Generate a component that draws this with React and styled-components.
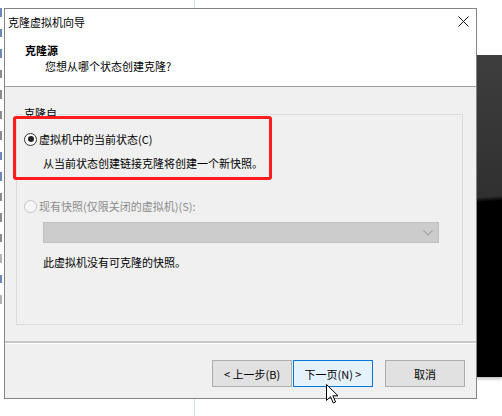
import React from 'react';
import styled, {createGlobalStyle} from 'styled-components';

const GlobalStyle = createGlobalStyle`
    html, body {
        margin: 0;
        padding: 0;
        background: #fff;
    }
    body {
        font-family: "Noto Sans CJK SC", "Noto Sans", sans-serif;
        font-size: 11px;
        color: #000;
    }
`;

// fragments of the page behind the dialog, only their right edges show
const edgeMarks = [
    {h: 9, c: '#3b5fa8'}, {h: 8, c: '#3b5fa8'}, {h: 9, c: '#3b5fa8'},
    {h: 8, c: '#666'}, {h: 9, c: '#666'}, {h: 8, c: '#666'},
    {h: 9, c: '#666'}, {h: 8, c: '#3b5fa8'}, {h: 9, c: '#3b5fa8'},
    {h: 8, c: '#666'}, {h: 9, c: '#666'}, {h: 8, c: '#666'},
    {h: 9, c: '#999'}, {h: 8, c: '#3b5fa8'}, {h: 9, c: '#999'},
];

const App = () => {
    return (
        <>
            <GlobalStyle/>
            <Screen>
                <GuideLine/>
                <EdgeStrip>
                    {edgeMarks.map((m, i) => (
                        <EdgeMark key={i} $h={m.h} $color={m.c}/>
                    ))}
                </EdgeStrip>
                <DarkPanel/>

                <Window>
                    <TitleBar>
                        <span>克隆虚拟机向导</span>
                        <CloseButton>
                            <svg width="11" height="11" viewBox="0 0 11 11">
                                <path d="M0.5 0.5 L10.5 10.5 M10.5 0.5 L0.5 10.5" stroke="#111" strokeWidth="1"/>
                            </svg>
                        </CloseButton>
                    </TitleBar>
                    <Header>
                        <HeaderTitle>克隆源</HeaderTitle>
                        <HeaderSub>您想从哪个状态创建克隆?</HeaderSub>
                    </Header>

                    <Body>
                        <Group>
                            <Legend>克隆自</Legend>
                            <RadioRow>
                                <Radio $checked/>
                                <span>虚拟机中的当前状态(C)</span>
                            </RadioRow>
                            <Indented $top={8}>从当前状态创建链接克隆将创建一个新快照。</Indented>
                            <RadioRow $top={27} $disabled>
                                <Radio $disabled/>
                                <span>现有快照(仅限关闭的虚拟机)(S):</span>
                            </RadioRow>
                            <Select>
                                <svg width="10" height="6" viewBox="0 0 10 6">
                                    <path d="M0.5 0.5 L5 5 L9.5 0.5" fill="none" stroke="#a6a6a6" strokeWidth="1.2"/>
                                </svg>
                            </Select>
                            <Indented $top={11}>此虚拟机没有可克隆的快照。</Indented>
                        </Group>
                    </Body>

                    <Separator/>

                    <Footer>
                        <Button>&lt; 上一步(B)</Button>
                        <Button $primary>下一页(N) &gt;</Button>
                        <Button $gap={12}>取消</Button>
                    </Footer>
                </Window>

                <Highlight/>
                <Cursor width="13" height="20" viewBox="0 0 13 20">
                    <path d="M0.5 0.5 L0.5 16.5 L4.5 12.7 L7.3 19 L9.6 18 L6.9 11.8 L12 11.8 Z"
                          fill="#fff" stroke="#000" strokeWidth="1" strokeLinejoin="round"/>
                </Cursor>
            </Screen>
        </>
    );
};

export default App;

const Screen = styled.div`
    position: relative;
    width: 502px;
    height: 416px;
    overflow: hidden;
    background: #fff;
`;

const GuideLine = styled.div`
    position: absolute;
    left: 194px;
    top: 0;
    width: 1px;
    height: 100%;
    background: #d3dde8;
`;

const EdgeStrip = styled.div`
    position: absolute;
    left: 0;
    top: 8px;
    width: 3px;
    height: 320px;
    display: flex;
    flex-direction: column;
    gap: 12px;
    overflow: hidden;
`;

const EdgeMark = styled.div`
    flex: none;
    width: 2px;
    height: ${p => p.$h}px;
    background: ${p => p.$color};
    opacity: 0.75;
`;

const DarkPanel = styled.div`
    position: absolute;
    left: 476px;
    top: 55px;
    width: 26px;
    height: 322px;
    background: linear-gradient(176deg, #3e3e3e 0%, #303030 44%, #000 45.5%, #000 100%);
    box-shadow: 0 2px 3px rgba(0, 0, 0, 0.25);
`;

const Window = styled.div`
    position: absolute;
    left: 4px;
    top: 8px;
    width: 473px;
    height: 391px;
    box-sizing: border-box;
    border: 1px solid #858585;
    background: #f0f0f0;
    display: flex;
    flex-direction: column;
`;

const TitleBar = styled.div`
    height: 24px;
    flex: none;
    display: flex;
    align-items: center;
    justify-content: space-between;
    padding-left: 3px;
    background: #fff;
    font-size: 11px;
    line-height: 14px;
    padding-top: 1px;
    box-sizing: border-box;
`;

const CloseButton = styled.div`
    width: 26px;
    height: 100%;
    display: flex;
    align-items: center;
    justify-content: center;
`;

const Header = styled.div`
    height: 54px;
    flex: none;
    box-sizing: border-box;
    background: #fff;
    border-bottom: 1px solid #a0a0a0;
    padding: 9px 0 0 20px;
    display: flex;
    flex-direction: column;
`;

const HeaderTitle = styled.div`
    font-weight: bold;
    line-height: 16px;
`;

const HeaderSub = styled.div`
    line-height: 16px;
    padding-left: 20px;
`;

const Body = styled.div`
    flex: none;
    height: 254px;
    box-sizing: border-box;
    padding: 27px 0 0 11px;
`;

const Group = styled.div`
    position: relative;
    width: 447px;
    height: 211px;
    box-sizing: border-box;
    border: 1px solid #dcdcdc;
    padding: 16px 0 0 7px;
    display: flex;
    flex-direction: column;
`;

const Legend = styled.span`
    position: absolute;
    left: 6px;
    top: -9px;
    padding: 0 1px;
    background: #f0f0f0;
    line-height: 14px;
`;

const RadioRow = styled.div`
    display: flex;
    align-items: center;
    gap: 2px;
    height: 16px;
    margin-top: ${p => p.$top || 0}px;
    color: ${p => p.$disabled ? '#8c8c8c' : '#000'};
`;

const Radio = styled.span`
    position: relative;
    width: 13px;
    height: 13px;
    box-sizing: border-box;
    border-radius: 50%;
    border: 1px solid ${p => p.$disabled ? '#c6c6c6' : '#333'};
    background: ${p => p.$disabled ? '#f6f6f6' : '#fff'};

    &::after {
        content: '';
        display: ${p => p.$checked ? 'block' : 'none'};
        position: absolute;
        left: 2.5px;
        top: 2.5px;
        width: 6px;
        height: 6px;
        border-radius: 50%;
        background: #222;
    }
`;

const Indented = styled.div`
    margin: ${p => p.$top || 0}px 0 0 19px;
    line-height: 16px;
`;

const Select = styled.div`
    margin: 8px 0 0 19px;
    width: 396px;
    height: 21px;
    box-sizing: border-box;
    border: 1px solid #c0c0c0;
    background: #cccccc;
    display: flex;
    align-items: center;
    justify-content: flex-end;
    padding-right: 5px;
`;

const Separator = styled.div`
    flex: none;
    height: 1px;
    border-top: 2px solid #c8c8c8;
    background: #fff;
`;

const Footer = styled.div`
    flex: 1;
    display: flex;
    justify-content: flex-end;
    align-items: flex-start;
    padding: 16px 11px 0 0;
`;

const Button = styled.div`
    width: 80px;
    height: 27px;
    box-sizing: border-box;
    margin-left: ${p => p.$gap || 1}px;
    display: flex;
    align-items: center;
    justify-content: center;
    border: 1px solid ${p => p.$primary ? '#0078d7' : '#adadad'};
    background: ${p => p.$primary ? '#e5f1fb' : '#e1e1e1'};
    font-size: 11px;
`;

const Highlight = styled.div`
    position: absolute;
    left: 13px;
    top: 116px;
    width: 259px;
    height: 64px;
    box-sizing: border-box;
    border: 3px solid #ff1c1c;
    border-radius: 3px;
`;

const Cursor = styled.svg`
    position: absolute;
    left: 326px;
    top: 384px;
`;
